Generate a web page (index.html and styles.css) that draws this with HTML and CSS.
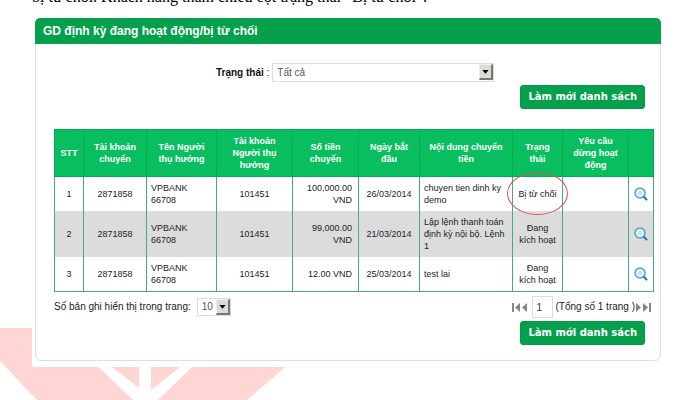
FILE: index.html
```html
<!DOCTYPE html>
<html lang="vi">
<head>
<meta charset="utf-8">
<title>GD định kỳ đang hoạt động/bị từ chối</title>
<link rel="stylesheet" href="styles.css">
</head>
<body>
<svg class="watermark" width="300" height="80" viewBox="0 0 300 80" aria-hidden="true">
  <path d="M0 8H58L133 80H37L0 41ZM112 47H139V68ZM151 47H180L151 70ZM192 47H285L247 80H158Z"/>
</svg>
<p class="intro">bị từ chối. Khách hàng tham chiếu cột trạng thái “Bị từ chối”.</p>
<main class="sheet">
  <section class="panel">
    <h1 class="panel-title">GD định kỳ đang hoạt động/bị từ chối</h1>
    <div class="panel-body">
      <div class="filter">
        <label class="filter-label" for="status"><b>Trạng thái</b> :</label>
        <span class="picker picker-wide">
          <select id="status"><option>Tất cả</option></select>
          <svg class="arrow" viewBox="0 0 14 16" aria-hidden="true"><path d="M3 6H11L7 11Z"/></svg>
        </span>
      </div>
      <div class="actions"><button class="refresh" type="button">Làm mới danh sách</button></div>
      <table class="orders">
        <colgroup><col class="c-no"><col class="c-from"><col class="c-name"><col class="c-to"><col class="c-sum"><col class="c-date"><col class="c-note"><col class="c-state"><col class="c-stop"><col class="c-view"></colgroup>
        <thead>
          <tr><th>STT</th><th>Tài khoản chuyển</th><th>Tên Người thụ hưởng</th><th>Tài khoản Người thụ hưởng</th><th>Số tiền chuyển</th><th>Ngày bắt đầu</th><th>Nội dung chuyển tiền</th><th>Trạng thái</th><th>Yêu cầu dừng hoạt động</th><th></th></tr>
        </thead>
        <tbody>
          <tr><td>1</td><td>2871858</td><td class="left">VPBANK<br>66708</td><td>101451</td><td class="right">100,000.00<br>VND</td><td>26/03/2014</td><td class="left">chuyen tien dinh ky demo</td><td class="marked">Bị từ chối</td><td></td><td><a class="view" href="#1" aria-label="Chi tiết 1"><svg viewBox="0 0 14 14"><use href="#lens"/></svg></a></td></tr>
          <tr><td>2</td><td>2871858</td><td class="left">VPBANK<br>66708</td><td>101451</td><td class="right">99,000.00<br>VND</td><td>21/03/2014</td><td class="left">Lập lệnh thanh toán<br>định kỳ nội bộ. Lệnh<br>1</td><td>Đang<br>kích hoạt</td><td></td><td><a class="view" href="#2" aria-label="Chi tiết 2"><svg viewBox="0 0 14 14"><use href="#lens"/></svg></a></td></tr>
          <tr><td>3</td><td>2871858</td><td class="left">VPBANK<br>66708</td><td>101451</td><td class="right">12.00 VND</td><td>25/03/2014</td><td class="left">test lai</td><td>Đang<br>kích hoạt</td><td></td><td><a class="view" href="#3" aria-label="Chi tiết 3"><svg viewBox="0 0 14 14"><use href="#lens"/></svg></a></td></tr>
        </tbody>
      </table>
      <div class="pager">
        <label for="size">Số bản ghi hiển thị trong trang:</label>
        <span class="picker picker-small">
          <select id="size"><option>10</option></select>
          <svg class="arrow" viewBox="0 0 14 16" aria-hidden="true"><path d="M3 6H11L7 11Z"/></svg>
        </span>
        <div class="pages">
          <button class="nav" type="button" aria-label="Trang đầu và trang trước"><svg viewBox="0 0 17 11"><path d="M1 1H3V10H1ZM9 1V10L4 5.500ZM16 1V10L11 5.500Z"/></svg></button>
          <input class="page" type="text" value="1" aria-label="Trang">
          <span>(Tổng số 1 trang )</span>
          <button class="nav" type="button" aria-label="Trang sau và trang cuối"><svg viewBox="0 0 17 11"><path d="M1 1V10L6 5.500ZM8 1V10L13 5.500ZM14 1H16V10H14Z"/></svg></button>
        </div>
      </div>
      <div class="actions"><button class="refresh" type="button">Làm mới danh sách</button></div>
    </div>
  </section>
</main>
<svg class="defs" aria-hidden="true">
  <symbol id="lens" viewBox="0 0 14 14">
    <circle cx="6" cy="6" r="5" fill="#e6f7fd" stroke="#4f9fc4" stroke-width="1.500"/>
    <circle cx="6" cy="6" r="2.500" fill="#bfe6f5"/>
    <path d="M10 10L12.500 12.500" stroke="#2877a8" stroke-width="2" stroke-linecap="round"/>
  </symbol>
</svg>
</body>
</html>
```
FILE: styles.css
```css
* { box-sizing: border-box; }
body {
  margin: 0;
  background: #fff;
  color: #222;
  font: 10px/12px "Liberation Sans", Arial, sans-serif;
  overflow: hidden;
}
.watermark { position: absolute; left: 0; top: 320px; z-index: -1; fill: #ffd6d4; }
.defs { position: absolute; width: 0; height: 0; }
.intro {
  margin: -12px 32px 0;
  font: 16px/18px "Liberation Serif", "Times New Roman", serif;
  color: #000;
  white-space: nowrap;
}
.sheet { margin: 10px 36px 0 32px; padding: 2px 3px 6px; background: #fff; }
.panel { border: 1px solid #cfe6de; border-radius: 6px; }
.panel-title {
  margin: -1px -1px 0;
  padding: 0 8px;
  background: #04a04c;
  border-radius: 5px 5px 0 0;
  color: #fff;
  font-size: 12px;
  line-height: 26px;
}
.panel-body { padding: 19px 8px 15px 18px; }
.filter { display: flex; align-items: center; padding-left: 162px; gap: 3px; }
.filter-label { color: #111; font-size: 10px; }
.picker { position: relative; display: flex; }
.picker select {
  appearance: none;
  width: 100%;
  margin: 0;
  padding: 0 4px;
  border: 1px solid #ddd;
  border-radius: 0;
  background: #fff;
  color: #555;
  font: 10px/16px "Liberation Sans", Arial, sans-serif;
}
.picker-wide { width: 222px; }
.picker-small { width: 34px; }
.picker-wide select { height: 19px; }
.picker-small select { height: 18px; }
.arrow {
  position: absolute;
  right: 1px;
  top: 1px;
  width: 14px;
  height: 16px;
  background: #dedbd4;
  border: solid;
  border-width: 1px 2px 2px 1px;
  border-color: #eee #777 #777 #eee;
  pointer-events: none;
}
.actions { display: flex; justify-content: flex-end; padding: 3px 7px 0 0; }
.refresh {
  height: 24px;
  padding: 0 7px;
  border: 1px solid #03964a;
  border-radius: 3px;
  background: #04a04c;
  color: #fff;
  font: bold 10px/20px "DejaVu Sans", Verdana, sans-serif;
}
.orders {
  width: 100%;
  margin-top: 20px;
  table-layout: fixed;
  border-collapse: collapse;
  color: #222;
  font-size: 9px;
}
.c-no { width: 29px; }
.c-from { width: 63px; }
.c-name { width: 70px; }
.c-to { width: 76px; }
.c-sum { width: 66px; }
.c-date { width: 61px; }
.c-note { width: 93px; }
.c-state { width: 50px; }
.c-stop { width: 66px; }
.c-view { width: 25px; }
.orders th { height: 47px; padding: 0 4px; background: #08be5f; color: #fff; border: 1px solid #05a855; }
.orders td { height: 34px; padding: 5px 4px; border: solid #3fae80; border-width: 0 1px; text-align: center; }
.orders tbody tr:last-child td { border-bottom-width: 1px; }
.orders .left { text-align: left; }
.orders .right { text-align: right; padding-right: 6px; }
.orders tbody tr:nth-child(even) { background: #dcdcdc; }
.orders .marked { position: relative; }
.marked::after {
  content: "";
  position: absolute;
  inset: -5px -6px -4px;
  border: 1px solid #d9534f;
  border-radius: 50%;
}
.view { display: block; }
.view svg { display: block; width: 14px; height: 14px; margin: 0 auto; }
.pager { display: flex; align-items: center; margin-top: 4px; gap: 6px; font-size: 10px; }
.pages { display: flex; align-items: center; margin-left: auto; }
.nav { padding: 0; border: 0; background: none; }
.nav svg { display: block; width: 17px; height: 11px; fill: #858585; }
.page {
  width: 21px;
  height: 22px;
  margin: 0 3px 0 4px;
  padding: 0 4px;
  border: 1px solid #ddd;
  background: #fff;
  color: #333;
  font: 10px/16px "Liberation Sans", Arial, sans-serif;
}
```
